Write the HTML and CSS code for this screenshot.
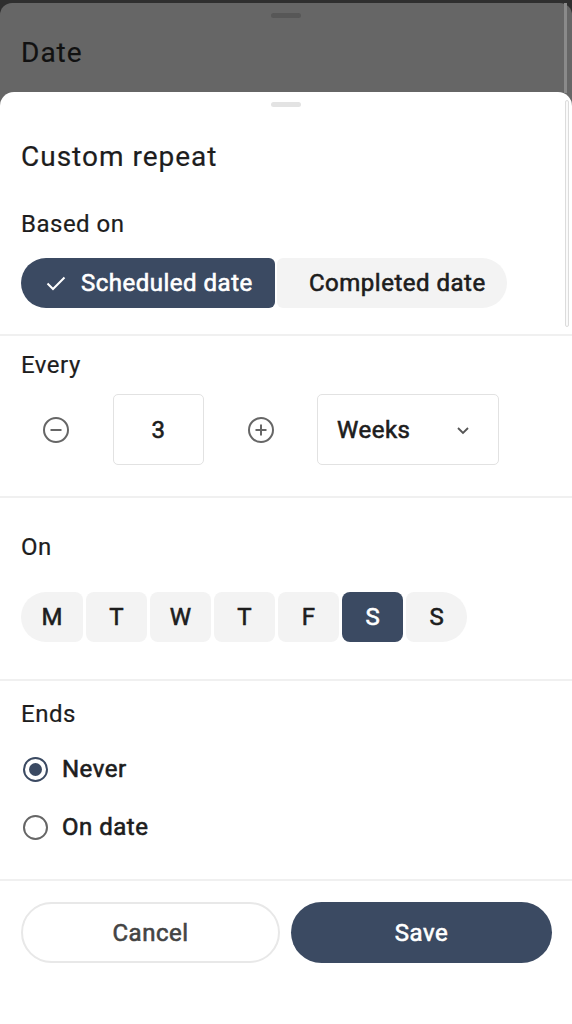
FILE: index.html
```html
<!DOCTYPE html>
<html lang="en">
<head>
<meta charset="utf-8">
<title>Custom repeat</title>
<link rel="stylesheet" href="styles.css">
</head>
<body>
<div class="screen">
  <div class="under-sheet">
    <div class="under-handle"></div>
    <div class="under-title">Date</div>
    <div class="under-scroll"></div>
  </div>

  <div class="sheet">
    <div class="handle"></div>
    <div class="sheet-scroll"></div>
    <h1 class="title">Custom repeat</h1>

    <section class="section based">
      <div class="label">Based on</div>
      <div class="segmented">
        <div class="seg seg-left seg-active">
          <svg class="check" viewBox="0 0 24 24" width="24" height="24"><polyline points="3.5,12.5 9,18 20.5,6.5" fill="none" stroke="#fff" stroke-width="2"/></svg>
          <span>Scheduled date</span>
        </div>
        <div class="seg seg-right"><span>Completed date</span></div>
      </div>
    </section>

    <div class="divider d1"></div>

    <section class="section every">
      <div class="label">Every</div>
      <div class="stepper">
        <div class="step-btn minus">
          <svg viewBox="0 0 28 28" width="28" height="28"><circle cx="14" cy="14" r="12" fill="none" stroke="#666" stroke-width="2"/><line x1="8.5" y1="14" x2="19.5" y2="14" stroke="#666" stroke-width="2"/></svg>
        </div>
        <div class="num-box">3</div>
        <div class="step-btn plus">
          <svg viewBox="0 0 28 28" width="28" height="28"><circle cx="14" cy="14" r="12" fill="none" stroke="#666" stroke-width="2"/><line x1="8.5" y1="14" x2="19.5" y2="14" stroke="#666" stroke-width="2"/><line x1="14" y1="8.5" x2="14" y2="19.5" stroke="#666" stroke-width="2"/></svg>
        </div>
        <div class="select-box">
          <span>Weeks</span>
          <svg class="chev" viewBox="0 0 16 16" width="16" height="16"><polyline points="3,6 8,11 13,6" fill="none" stroke="#555" stroke-width="1.8"/></svg>
        </div>
      </div>
    </section>

    <div class="divider d2"></div>

    <section class="section on">
      <div class="label">On</div>
      <div class="days">
        <div class="day day-first">M</div>
        <div class="day">T</div>
        <div class="day">W</div>
        <div class="day">T</div>
        <div class="day">F</div>
        <div class="day day-active">S</div>
        <div class="day day-last">S</div>
      </div>
    </section>

    <div class="divider d3"></div>

    <section class="section ends">
      <div class="label">Ends</div>
      <div class="radio-row r1">
        <span class="radio radio-on"><span class="dot"></span></span>
        <span class="radio-text">Never</span>
      </div>
      <div class="radio-row r2">
        <span class="radio"></span>
        <span class="radio-text">On date</span>
      </div>
    </section>

    <div class="divider d4"></div>

    <div class="actions">
      <div class="btn btn-cancel">Cancel</div>
      <div class="btn btn-save">Save</div>
    </div>
  </div>
</div>
</body>
</html>
```

FILE: styles.css
```css
* { box-sizing: border-box; }
html, body {
  margin: 0;
  padding: 0;
}
body {
  width: 572px;
  height: 1024px;
  overflow: hidden;
  background: #2f2f2f;
  font-family: Roboto, "Noto Sans", "Liberation Sans", sans-serif;
  color: #1d1d1d;
}
.screen {
  position: relative;
  width: 572px;
  height: 1024px;
  padding-top: 3px;
}
.under-sheet {
  position: relative;
  height: 1021px;
  background: #666666;
  border-radius: 12px 12px 0 0;
  padding-top: 10px;
}
.under-handle {
  width: 30px;
  height: 5px;
  border-radius: 3px;
  background: #575757;
  margin: 0 auto;
}
.under-title {
  margin: 19px 0 0 21px;
  font-size: 28px;
  line-height: 32px;
  letter-spacing: 1px;
  color: #111;
  -webkit-text-stroke: 0.2px #111;
}
.under-scroll {
  position: absolute;
  right: 5px;
  top: 0;
  width: 3px;
  height: 90px;
  background: #8a8a8a;
}

.sheet {
  position: absolute;
  left: 0;
  top: 92px;
  width: 572px;
  height: 932px;
  background: #fff;
  border-radius: 14px 14px 0 0;
  padding-top: 10px;
}
.handle {
  width: 30px;
  height: 5px;
  border-radius: 3px;
  background: #e3e3e3;
  margin: 0 auto;
}
.sheet-scroll {
  position: absolute;
  right: 3px;
  top: 8px;
  width: 4px;
  height: 227px;
  border: 1px solid #dcdcdc;
  border-radius: 2px;
  background: #fafafa;
}
.title {
  margin: 34px 0 0 21px;
  font-size: 28px;
  line-height: 32px;
  font-weight: 400;
  letter-spacing: 1px;
  color: #1d1d1d;
  -webkit-text-stroke: 0.2px #1d1d1d;
}
.section {
  padding: 0 21px;
}
.label {
  font-size: 24px;
  line-height: 28px;
  font-weight: 400;
  letter-spacing: 0.5px;
  color: #1d1d1d;
  -webkit-text-stroke: 0.2px #1d1d1d;
}
.seg, .num-box, .select-box, .day, .radio-text, .btn {
  font-family: Roboto, "Noto Sans", sans-serif;
  font-weight: 400;
  font-size: 24px;
  letter-spacing: 0.5px;
  -webkit-text-stroke: 0.6px currentColor;
}
.based { margin-top: 37px; }
.segmented {
  display: flex;
  gap: 2px;
  margin-top: 20px;
}
.seg {
  height: 50px;
  display: flex;
  align-items: center;
}
.seg-left {
  width: 254px;
  border-radius: 25px 6px 6px 25px;
  padding-left: 23px;
  gap: 13px;
}
.seg-active {
  background: #3b4a62;
  color: #fff;
}
.seg-right {
  width: 230px;
  border-radius: 6px 25px 25px 6px;
  background: #f3f3f3;
  color: #1d1d1d;
  padding-left: 32px;
}
.check { flex: none; }

.divider {
  height: 2px;
  background: #f0f0f0;
}
.d1 { margin-top: 26px; }
.every { margin-top: 15px; }
.stepper {
  display: flex;
  align-items: center;
  margin-top: 15px;
  height: 71px;
}
.step-btn {
  display: flex;
  align-items: center;
  justify-content: center;
  height: 71px;
}
.minus { width: 70px; }
.plus { width: 113px; }
.num-box {
  margin-left: 22px;
  width: 91px;
  height: 71px;
  border: 1.5px solid #e2e2e2;
  border-radius: 5px;
  display: flex;
  align-items: center;
  justify-content: center;
}
.select-box {
  width: 182px;
  height: 71px;
  border: 1.5px solid #e2e2e2;
  border-radius: 5px;
  display: flex;
  align-items: center;
  justify-content: space-between;
  padding: 0 27px 0 19px;
}
.d2 { margin-top: 31px; }
.on { margin-top: 35px; }
.days {
  display: flex;
  gap: 3px;
  margin-top: 31px;
}
.day {
  width: 61px;
  height: 50px;
  background: #f3f3f3;
  border-radius: 8px;
  display: flex;
  align-items: center;
  justify-content: center;
  color: #1d1d1d;
  letter-spacing: 0;
}
.day-first { border-radius: 25px 8px 8px 25px; width: 62px; }
.day-last { border-radius: 8px 25px 25px 8px; }
.day-active {
  background: #3b4a62;
  color: #fff;
}
.d3 { margin-top: 37px; }
.ends { margin-top: 19px; }
.radio-row {
  display: flex;
  align-items: center;
  height: 40px;
  gap: 14px;
  padding-left: 2px;
}
.r1 { margin-top: 21px; }
.r2 { margin-top: 18px; }
.radio {
  width: 25px;
  height: 25px;
  border-radius: 50%;
  border: 2.2px solid #666;
  display: flex;
  align-items: center;
  justify-content: center;
}
.radio-on { border-color: #3b4a62; }
.dot {
  width: 13px;
  height: 13px;
  border-radius: 50%;
  background: #3b4a62;
}
.radio-text {
  color: #1d1d1d;
}
.d4 { margin-top: 32px; }
.actions {
  display: flex;
  gap: 11px;
  padding: 0 20px 0 21px;
  margin-top: 21px;
}
.btn {
  height: 61px;
  border-radius: 31px;
  display: flex;
  align-items: center;
  justify-content: center;
}
.btn-cancel {
  width: 259px;
  border: 2px solid #e8e8e8;
  color: #444;
}
.btn-save {
  width: 261px;
  background: #3b4a62;
  color: #fff;
}
```
